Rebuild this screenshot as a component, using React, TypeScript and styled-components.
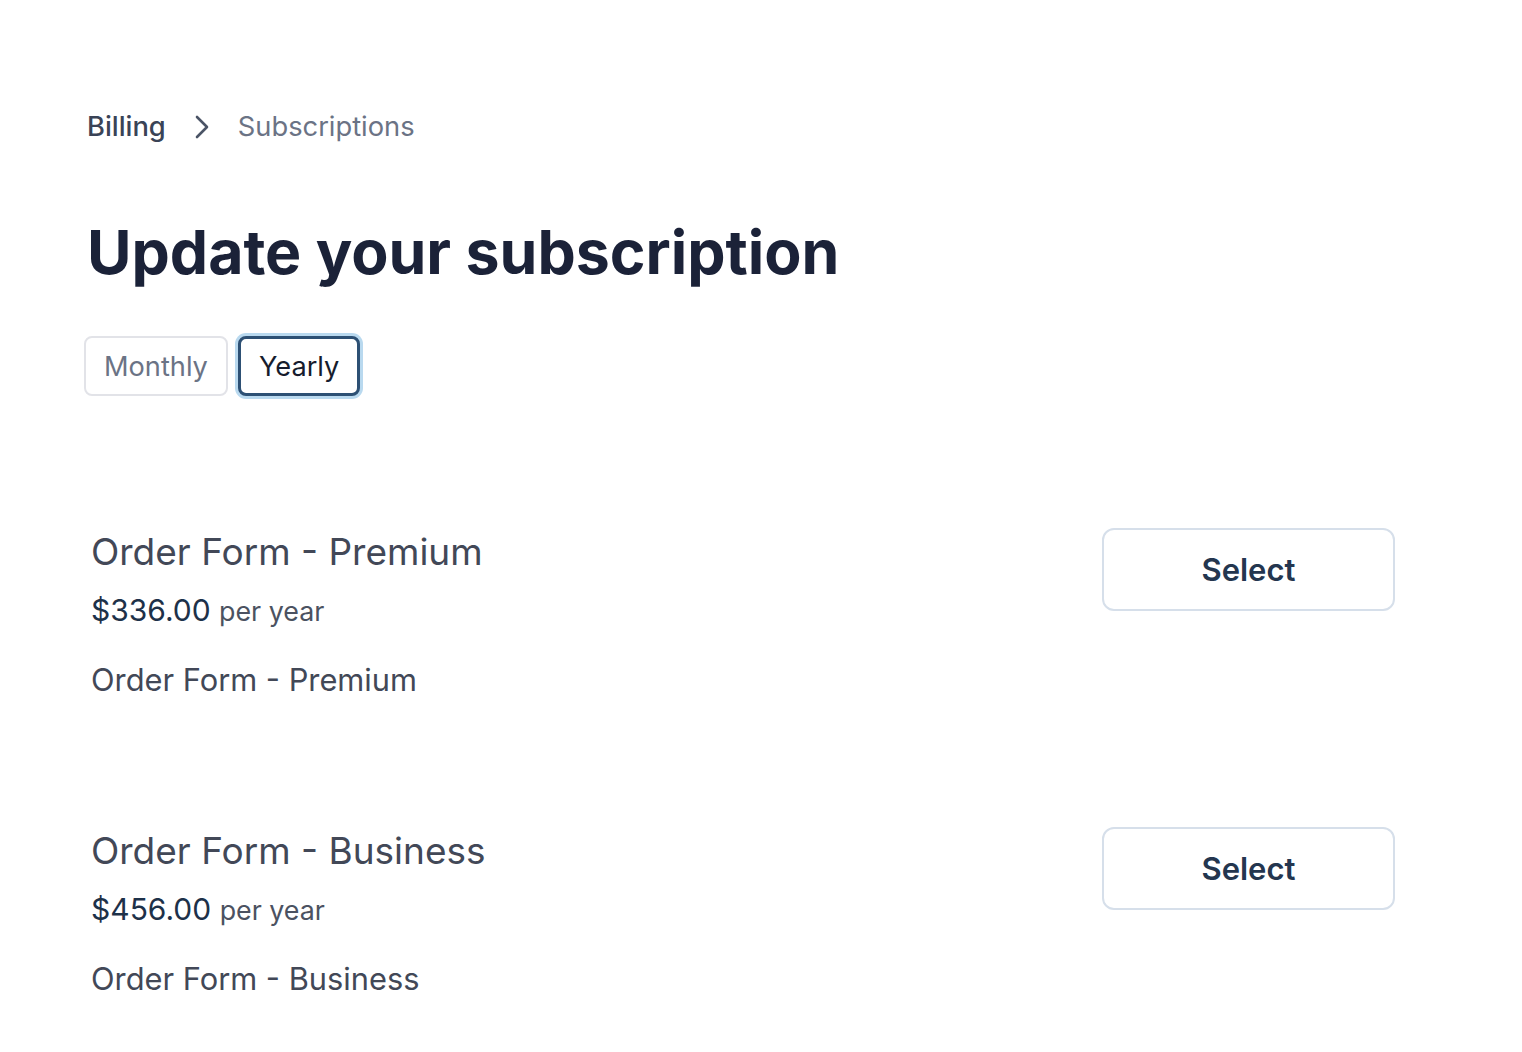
import React from "react";
import styled, { createGlobalStyle } from "styled-components";

const GlobalStyle = createGlobalStyle`
  * { box-sizing: border-box; }
  body {
    margin: 0;
    background: #ffffff;
    font-family: Inter, "Noto Sans", "Liberation Sans", sans-serif;
    -webkit-font-smoothing: antialiased;
  }
`;

const Page = styled.main`
  padding: 107px 127px 40px 87px;
  display: flex;
  flex-direction: column;
`;

const Breadcrumb = styled.nav`
  display: flex;
  align-items: center;
  gap: 29px;
  font-size: 27.3px;
  line-height: 40px;
`;

const Crumb = styled.span<{ $current?: boolean }>`
  color: ${(p) => (p.$current ? "#6b7385" : "#3a4356")};
  font-weight: ${(p) => (p.$current ? 400 : 500)};
`;

const Title = styled.h1`
  margin: 69px 0 0;
  font-size: 60.8px;
  line-height: 72px;
  font-weight: 700;
  color: #1b2238;
`;

const Toggle = styled.div`
  display: flex;
  gap: 10px;
  margin-top: 48px;
  margin-left: -3px;
`;

const ToggleButton = styled.button<{ $active?: boolean }>`
  font-family: inherit;
  font-size: 27.2px;
  height: 60px;
  padding: 0 18px;
  background: #fff;
  border-radius: 8px;
  cursor: pointer;
  color: ${(p) => (p.$active ? "#161c2d" : "#6b7385")};
  border: ${(p) => (p.$active ? "3px solid #2d5074" : "2px solid #e2e3e8")};
  box-shadow: ${(p) => (p.$active ? "0 0 0 3px #b9d9ef" : "none")};
`;

const PlanList = styled.div`
  display: flex;
  flex-direction: column;
  gap: 124px;
  margin-top: 131px;
  padding-left: 4px;
`;

const PlanRow = styled.section`
  display: flex;
  justify-content: space-between;
  align-items: flex-start;
`;

const PlanInfo = styled.div`
  display: flex;
  flex-direction: column;
`;

const PlanName = styled.h2`
  margin: 0;
  font-size: 37px;
  line-height: 50px;
  font-weight: 400;
  color: #424857;
`;

const Price = styled.div`
  margin-top: 13px;
  font-size: 30px;
  line-height: 40px;
  color: #1d3149;
`;

const Period = styled.span`
  font-size: 26.8px;
  color: #4b5261;
`;

const Description = styled.p`
  margin: 27px 0 0;
  font-size: 30.8px;
  line-height: 44px;
  color: #424857;
`;

const SelectButton = styled.button`
  width: 293px;
  height: 83px;
  margin-top: 1px;
  background: #fff;
  border: 2px solid #d6dfea;
  border-radius: 12px;
  font-family: inherit;
  font-size: 31px;
  font-weight: 600;
  color: #24364f;
  cursor: pointer;
`;

const Chevron = () => (
  <svg width="14" height="24" viewBox="0 0 14 24" fill="none" aria-hidden>
    <path d="M2 2l10 10-10 10" stroke="#4b5466" strokeWidth="2.6" strokeLinecap="round" strokeLinejoin="round" />
  </svg>
);

const plans = [
  { name: "Order Form - Premium", price: "$336.00", desc: "Order Form - Premium" },
  { name: "Order Form - Business", price: "$456.00", desc: "Order Form - Business" },
];

export default function App() {
  return (
    <>
      <GlobalStyle />
      <Page>
        <Breadcrumb>
          <Crumb>Billing</Crumb>
          <Chevron />
          <Crumb $current>Subscriptions</Crumb>
        </Breadcrumb>
        <Title>Update your subscription</Title>
        <Toggle>
          <ToggleButton>Monthly</ToggleButton>
          <ToggleButton $active>Yearly</ToggleButton>
        </Toggle>
        <PlanList>
          {plans.map((p) => (
            <PlanRow key={p.name}>
              <PlanInfo>
                <PlanName>{p.name}</PlanName>
                <Price>
                  {p.price} <Period>per year</Period>
                </Price>
                <Description>{p.desc}</Description>
              </PlanInfo>
              <SelectButton>Select</SelectButton>
            </PlanRow>
          ))}
        </PlanList>
      </Page>
    </>
  );
}
